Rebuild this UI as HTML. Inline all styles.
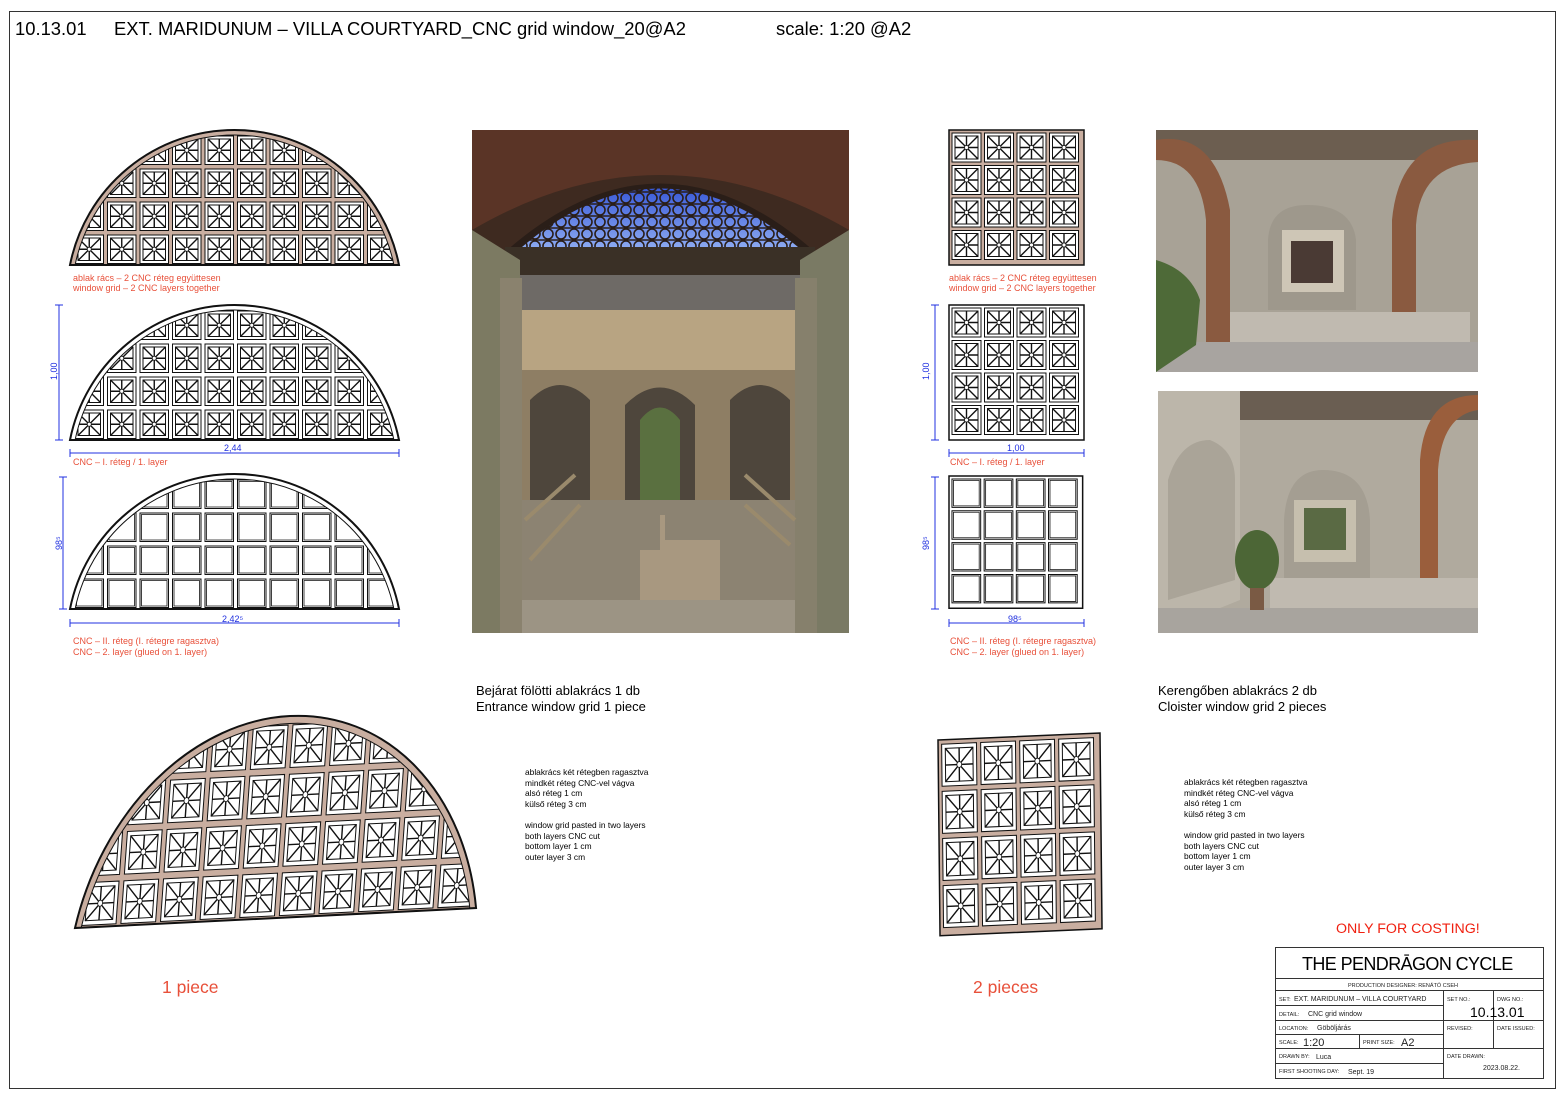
<!DOCTYPE html>
<html><head><meta charset="utf-8"><style>
html,body{margin:0;padding:0;background:#fff;width:1566px;height:1100px;overflow:hidden}
svg{display:block}
text{font-family:"Liberation Sans","DejaVu Sans",sans-serif}
.r{fill:#e8503a;font-size:9px}
.b{fill:#2030e0;font-size:9px}
</style></head><body>
<svg id="s" width="1566" height="1100" viewBox="0 0 1566 1100" xmlns="http://www.w3.org/2000/svg">
<defs>
<linearGradient id="sky" x1="0" y1="0" x2="0" y2="1"><stop offset="0" stop-color="#3a5ad8"/><stop offset="1" stop-color="#8aa8f0"/></linearGradient>
<clipPath id="archc"><path d="M522 247 Q660 125 798 247Z"/></clipPath>
</defs>
<rect x="9.5" y="11.5" width="1546" height="1077" fill="none" stroke="#333" stroke-width="1"/>
<text x="15" y="35" font-size="18.4">10.13.01</text>
<text x="114" y="35" font-size="18.4">EXT. MARIDUNUM – VILLA COURTYARD_CNC grid window_20@A2</text>
<text x="776" y="35" font-size="18.4">scale: 1:20 @A2</text>

<g>
<rect x="472" y="130" width="377" height="503" fill="#3e2a20"/>
<path d="M472 130 H849 V230 Q660 120 472 230Z" fill="#5a3426"/>
<path d="M505 252 Q660 115 815 252Z" fill="#2a1e18"/>
<path d="M522 247 Q660 130 798 247Z" fill="url(#sky)"/>
<g id="lat" stroke="#2a1e18" stroke-width="1.6" fill="none" clip-path="url(#archc)"></g>
<rect x="505" y="247" width="310" height="28" fill="#3a3026"/>
<rect x="520" y="275" width="280" height="35" fill="#6e6a66"/>
<rect x="520" y="310" width="280" height="60" fill="#b8a482"/>
<rect x="520" y="370" width="280" height="150" fill="#8e7e64"/>
<path d="M530 520 V400 Q560 370 590 400 V520Z M625 520 V405 Q660 370 695 405 V520Z M730 520 V400 Q760 370 790 400 V520Z" fill="#4e463c"/>
<path d="M640 500 V420 Q660 395 680 420 V500Z" fill="#5a7040"/>
<rect x="520" y="500" width="280" height="110" fill="#8c8372"/>
<path d="M600 515 H660 V550 H640 V600 H720 V540 H665 V515Z" fill="#a89880"/>
<rect x="520" y="600" width="280" height="33" fill="#9c9484"/>
<path d="M472 230 L520 260 V633 H472Z" fill="#7c7a62"/>
<path d="M849 230 L800 260 V633 H849Z" fill="#7a7a64"/>
<rect x="500" y="278" width="22" height="355" fill="#8a826e"/>
<rect x="795" y="278" width="22" height="355" fill="#86806c"/>
<path d="M525 520 L575 475 M530 560 L580 505 M745 475 L795 520 M745 505 L790 545" stroke="#9a8a6c" stroke-width="4"/>
</g>

<g>
<rect x="1156" y="130" width="322" height="242" fill="#a8a296"/>
<rect x="1156" y="130" width="322" height="30" fill="#6c5e50"/>
<path d="M1156 140 Q1215 130 1230 210 V342 H1206 V220 Q1200 160 1156 160Z" fill="#8a5a40"/>
<path d="M1478 140 Q1400 135 1392 220 V342 H1416 V225 Q1420 165 1478 162Z" fill="#8a5a40"/>
<path d="M1268 310 V240 Q1270 205 1307 205 Q1352 205 1356 240 V310Z" fill="#9e988c"/>
<rect x="1282" y="230" width="62" height="62" fill="#cec6b6"/>
<rect x="1291" y="241" width="42" height="42" fill="#4a3a34"/>
<rect x="1230" y="312" width="240" height="30" fill="#c0bab0"/>
<rect x="1156" y="342" width="322" height="30" fill="#a8a4a0"/>
<path d="M1156 260 Q1190 270 1200 300 L1196 345 L1156 372Z" fill="#4e6a38"/>
</g>

<g>
<rect x="1158" y="391" width="320" height="242" fill="#b0aa9e"/>
<path d="M1225 391 H1478 V420 H1240Z" fill="#6a5e52"/>
<path d="M1158 391 H1240 V600 L1158 633Z" fill="#bcb6aa"/>
<path d="M1168 600 V480 Q1180 440 1210 440 Q1235 450 1235 480 V580Z" fill="#aaa498"/>
<path d="M1284 590 V520 Q1287 470 1323 470 Q1367 470 1370 520 V590Z" fill="#a49e92"/>
<rect x="1294" y="500" width="62" height="62" fill="#c6bfae"/>
<rect x="1304" y="508" width="42" height="42" fill="#5a6a44"/>
<path d="M1478 395 Q1425 395 1420 460 V610 H1438 V470 Q1442 415 1478 410Z" fill="#9a5e3c"/>
<rect x="1270" y="578" width="208" height="30" fill="#c0bab0"/>
<rect x="1158" y="608" width="320" height="25" fill="#a8a49e"/>
<ellipse cx="1257" cy="560" rx="22" ry="30" fill="#4c6636"/>
<rect x="1250" y="588" width="14" height="22" fill="#7a5a44"/>
</g>

<g id="g"></g>

<text class="r" x="73" y="281">ablak rács – 2 CNC réteg együttesen</text>
<text class="r" x="73" y="291">window grid  – 2 CNC layers together</text>
<text class="r" x="73" y="465">CNC – I. réteg / 1. layer</text>
<text class="r" x="73" y="644">CNC – II. réteg (I. rétegre ragasztva)</text>
<text class="r" x="73" y="655">CNC – 2. layer (glued on 1. layer)</text>
<text class="r" x="949" y="281">ablak rács – 2 CNC réteg együttesen</text>
<text class="r" x="949" y="291">window grid  – 2 CNC layers together</text>
<text class="r" x="950" y="465">CNC – I. réteg / 1. layer</text>
<text class="r" x="950" y="644">CNC – II. réteg (I. rétegre ragasztva)</text>
<text class="r" x="950" y="655">CNC – 2. layer (glued on 1. layer)</text>
<g stroke="#2030e0" stroke-width="1" fill="none">
<path d="M59 305 V440 M55 305 H63 M55 440 H63"/>
<path d="M63 477 V609 M59 477 H67 M59 609 H67"/>
<path d="M70 453 H399 M70 449 V457 M399 449 V457"/>
<path d="M70 623 H399 M70 619 V627 M399 619 V627"/>
<path d="M935 305 V440 M931 305 H939 M931 440 H939"/>
<path d="M935 477 V609 M931 477 H939 M931 609 H939"/>
<path d="M949 453 H1084 M949 449 V457 M1084 449 V457"/>
<path d="M949 623 H1084 M949 619 V627 M1084 619 V627"/>
</g>
<text class="b" x="224" y="451">2,44</text>
<text class="b" x="222" y="622">2,42⁵</text>
<text class="b" x="1007" y="451">1,00</text>
<text class="b" x="1008" y="622">98⁵</text>
<text class="b" transform="translate(57,380) rotate(-90)">1,00</text>
<text class="b" transform="translate(62,550) rotate(-90)">98⁵</text>
<text class="b" transform="translate(929,380) rotate(-90)">1,00</text>
<text class="b" transform="translate(929,550) rotate(-90)">98⁵</text>

<text x="476" y="695" font-size="13">Bejárat fölötti ablakrács 1 db</text>
<text x="476" y="711" font-size="13">Entrance window grid 1 piece</text>
<text x="1158" y="695" font-size="13">Kerengőben ablakrács 2 db</text>
<text x="1158" y="711" font-size="13">Cloister window grid 2 pieces</text>
<g font-size="8.4">
<text x="525" y="775">ablakrács két rétegben ragasztva</text>
<text x="525" y="786">mindkét réteg CNC-vel vágva</text>
<text x="525" y="796">alsó réteg 1 cm</text>
<text x="525" y="807">külső réteg 3 cm</text>
<text x="525" y="828">window grid pasted in two layers</text>
<text x="525" y="839">both layers CNC cut</text>
<text x="525" y="849">bottom layer 1 cm</text>
<text x="525" y="860">outer layer 3 cm</text>
<text x="1184" y="785">ablakrács két rétegben ragasztva</text>
<text x="1184" y="796">mindkét réteg CNC-vel vágva</text>
<text x="1184" y="806">alsó réteg 1 cm</text>
<text x="1184" y="817">külső réteg 3 cm</text>
<text x="1184" y="838">window grid pasted in two layers</text>
<text x="1184" y="849">both layers CNC cut</text>
<text x="1184" y="859">bottom layer 1 cm</text>
<text x="1184" y="870">outer layer 3 cm</text>
</g>
<text x="162" y="993" font-size="17.5" fill="#e8503a">1 piece</text>
<text x="973" y="993" font-size="17.5" fill="#e8503a">2 pieces</text>
<text x="1336" y="933" font-size="14.2" fill="#f02010">ONLY FOR COSTING!</text>

<g stroke="#333" stroke-width="1" fill="none">
<rect x="1275.5" y="947.5" width="268" height="131"/>
<path d="M1276 978.5 H1543 M1276 990.5 H1543 M1276 1005.5 H1443 M1276 1020.5 H1543 M1276 1034.5 H1443 M1276 1048.5 H1543 M1276 1063.5 H1443 M1443.5 990 V1078 M1493.5 990 V1048 M1359.5 1034 V1048"/>
</g>
<text x="1302" y="970" font-size="18" style="font-family:'Liberation Sans',sans-serif;font-weight:300" letter-spacing="-0.6">THE PENDRĀGON CYCLE</text>
<g font-size="5.5" fill="#222">
<text x="1348" y="987">PRODUCTION DESIGNER: RENÁTÓ CSEH</text>
<text x="1279" y="1001">SET:</text><text x="1294" y="1001" font-size="7">EXT. MARIDUNUM – VILLA COURTYARD</text>
<text x="1447" y="1001">SET NO.:</text><text x="1497" y="1001">DWG NO.:</text>
<text x="1279" y="1016">DETAIL:</text><text x="1308" y="1016" font-size="7">CNC grid window</text>
<text x="1279" y="1030">LOCATION:</text><text x="1317" y="1030" font-size="7">Göböljárás</text>
<text x="1447" y="1030">REVISED:</text><text x="1497" y="1030">DATE ISSUED:</text>
<text x="1279" y="1044">SCALE:</text><text x="1303" y="1046" font-size="11">1:20</text>
<text x="1363" y="1044">PRINT SIZE:</text><text x="1401" y="1046" font-size="11">A2</text>
<text x="1279" y="1058">DRAWN BY:</text><text x="1316" y="1059" font-size="7">Luca</text>
<text x="1447" y="1058">DATE DRAWN:</text>
<text x="1279" y="1073">FIRST SHOOTING DAY:</text><text x="1348" y="1074" font-size="7">Sept. 19</text>
<text x="1483" y="1070" font-size="7">2023.08.22.</text>
</g>
<text x="1470" y="1017" font-size="14">10.13.01</text>
</svg>
<script>
var NS="http://www.w3.org/2000/svg",G=document.getElementById('g'),cid=0;
function el(t,a,p){var e=document.createElementNS(NS,t);for(var k in a)e.setAttribute(k,a[k]);(p||G).appendChild(e);return e;}
function segPath(w,h){var r=(w*w/4+h*h)/(2*h);return "M0 0 A"+r+" "+r+" 0 0 1 "+w+" 0Z";}
function star(p,x,y,s){
 el('rect',{x:x,y:y,width:s,height:s,fill:'#fff',stroke:'#111','stroke-width':1,'vector-effect':'non-scaling-stroke'},p);
 var i=3;el('rect',{x:x+i,y:y+i,width:s-2*i,height:s-2*i,fill:'none',stroke:'#111','stroke-width':1,'vector-effect':'non-scaling-stroke'},p);
 var c=s/2,d="M"+(x+i)+" "+(y+i)+"L"+(x+s-i)+" "+(y+s-i)+"M"+(x+s-i)+" "+(y+i)+"L"+(x+i)+" "+(y+s-i)+"M"+(x+c)+" "+(y+i)+"V"+(y+s-i)+"M"+(x+i)+" "+(y+c)+"H"+(x+s-i);
 el('path',{d:d,stroke:'#111','stroke-width':1.4,fill:'none','vector-effect':'non-scaling-stroke'},p);
 el('circle',{cx:x+c,cy:y+c,r:2,fill:'#fff',stroke:'#111','stroke-width':0.8,'vector-effect':'non-scaling-stroke'},p);
}
function plain(p,x,y,s){el('rect',{x:x,y:y,width:s,height:s,fill:'#fff',stroke:'#111','stroke-width':1,'vector-effect':'non-scaling-stroke'},p);el('rect',{x:x+1.5,y:y+1.5,width:s-3,height:s-3,fill:'none',stroke:'#111','stroke-width':0.8,'vector-effect':'non-scaling-stroke'},p);}
function semi(tr,mode,brown){
 var g=el('g',{transform:tr});var w=329,h=135,d=segPath(w,h);
 var id='c'+(cid++);var cp=el('clipPath',{id:id},g);el('path',{d:d},cp);
 el('path',{d:d,fill:brown?'#c9aea0':'#fff',stroke:'none'},g);
 var cg=el('g',{'clip-path':'url(#'+id+')'},g);
 var id2='c'+(cid++);var cp2=el('clipPath',{id:id2},g);
 var r=(w*w/4+h*h)/(2*h),r2=r-5;el('circle',{cx:w/2,cy:r-h,r:r2},cp2);
 var ig=el('g',{'clip-path':'url(#'+id2+')'},cg);
 var cw=32.5;
 for(var row=0;row<4;row++)for(var col=0;col<10;col++){
  var x=3+col*cw+2,y=-(row+1)*33+3,s=cw-4;
  if(mode==0)plain(ig,x,y,s);else star(ig,x,y,s);
 }
 el('path',{d:d,fill:'none',stroke:'#111','stroke-width':2,'vector-effect':'non-scaling-stroke'},g);
 el('circle',{cx:w/2,cy:r-h,r:r2,fill:'none',stroke:'#111','stroke-width':1,'vector-effect':'non-scaling-stroke','clip-path':'url(#'+id+')'},g);
}
semi('translate(70,265)',1,true);
semi('translate(70,440)',1,false);
semi('translate(70,609)',0,false);
semi('matrix(1.219,-0.0608,-0.107,1.496,75,928)',1,true);
function sq(tr,mode,brown){
 var g=el('g',{transform:tr});
 el('rect',{x:0,y:0,width:135,height:135,fill:brown?'#c9aea0':'#fff',stroke:'#111','stroke-width':1.5,'vector-effect':'non-scaling-stroke'},g);
 for(var r=0;r<4;r++)for(var c=0;c<4;c++){var x=3+c*32.5,y=3+r*32.5,s=29;if(mode==0)plain(g,x,y,s);else star(g,x,y,s);}
}
sq('translate(949,130)',1,true);
sq('translate(949,305)',1,false);
sq('translate(949,476) scale(0.99,0.98)',0,false);
sq('matrix(1.2,-0.052,0.015,1.45,938,740)',1,true);
var L=document.getElementById('lat');
for(var i=0;i<22;i++){for(var j=0;j<9;j++){el('circle',{cx:522+i*13,cy:150+j*12,r:5},L);}}
for(var j=0;j<9;j++)el('line',{x1:520,y1:156+j*12,x2:800,y2:156+j*12},L);
</script>
</body></html>
